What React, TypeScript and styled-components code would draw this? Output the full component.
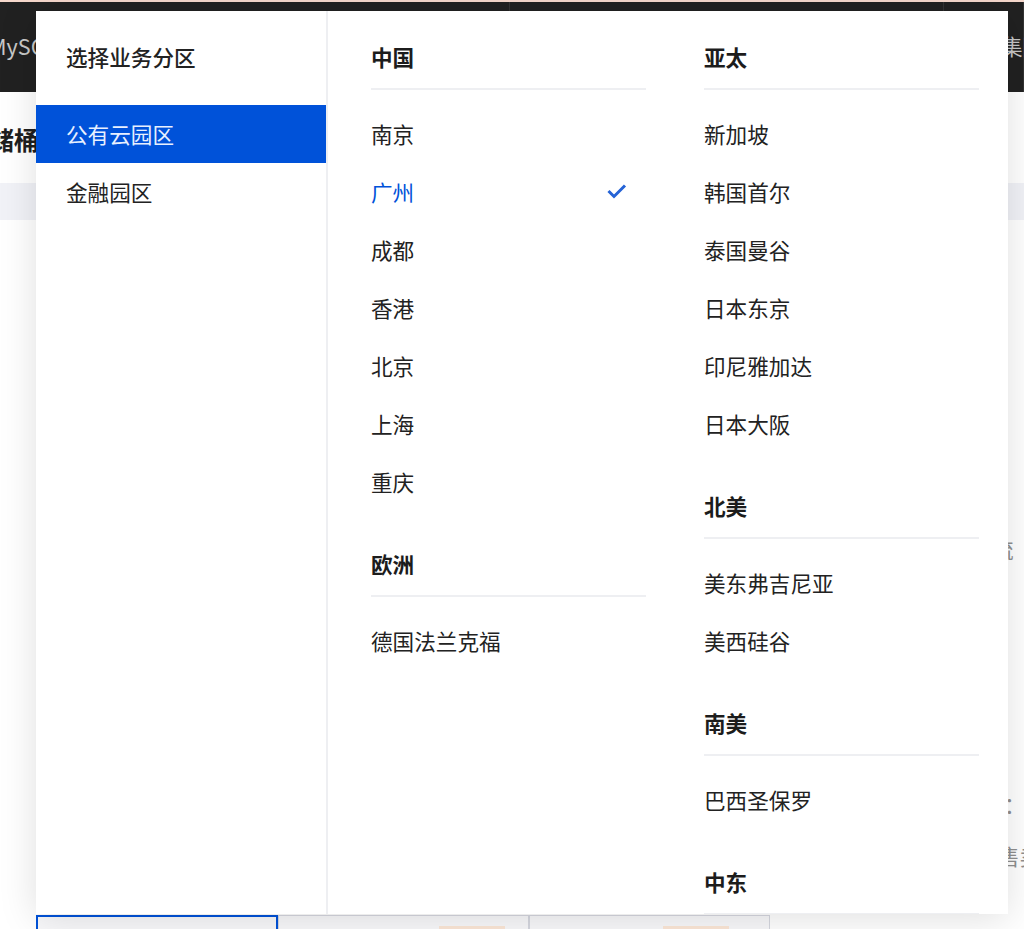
import { createGlobalStyle, styled } from 'styled-components';

const GlobalStyle = createGlobalStyle`
  html, body {
    margin: 0;
    padding: 0;
    background: #fff;
  }
  * {
    box-sizing: border-box;
  }
`;

const fontStack = `"Noto Sans CJK SC", "Liberation Sans", sans-serif`;

const Page = styled.div`
  position: relative;
  display: flex;
  flex-direction: column;
  width: 1024px;
  height: 929px;
  overflow: hidden;
  background: #fff;
  font-family: ${fontStack};
`;

const TopBar = styled.div`
  display: flex;
  flex: none;
  height: 92px;
  background: #212121;
  border-top: 2px solid #f6d8cc;
`;

const TopTab = styled.div<{ $width: number; $inset: number }>`
  flex: none;
  width: ${(p) => p.$width}px;
  padding-left: ${(p) => p.$inset}px;
  padding-top: 28px;
  border-right: 1px solid #333;
  color: #c8c8c8;
  font-size: 21.6px;
  line-height: 32px;
  white-space: nowrap;
`;

const TitleRow = styled.div`
  flex: none;
  height: 91px;
  padding-top: 29px;
  margin-left: -36px;
  color: #1f1f1f;
  font-size: 25px;
  font-weight: 700;
  line-height: 36px;
`;

const FilterStrip = styled.div`
  flex: none;
  height: 37px;
  background: #f1f2f7;
`;

const Body = styled.div`
  flex: none;
  height: 695px;
  padding-left: 992px;
  padding-top: 313px;
`;

const Note = styled.div<{ $gap: number; $indent?: number }>`
  margin-top: ${(p) => p.$gap}px;
  margin-left: ${(p) => p.$indent ?? 0}px;
  color: #8f8f8f;
  font-size: 21.6px;
  line-height: 32px;
  white-space: nowrap;
`;

const CardRow = styled.div`
  display: flex;
  flex: none;
  height: 60px;
  padding-left: 36px;
`;

const Card = styled.div<{ $width: number; $active?: boolean; $tagInset?: number }>`
  display: flex;
  justify-content: flex-end;
  flex: none;
  width: ${(p) => p.$width}px;
  padding-top: 10px;
  padding-right: ${(p) => p.$tagInset ?? 0}px;
  background: #f8f8fa;
  border: ${(p) => (p.$active ? '2px solid #0052d9' : '1px solid #d5d7df')};
`;

const CardTag = styled.span`
  width: 66px;
  height: 24px;
  background: #fbe6d6;
`;

const Panel = styled.div`
  position: absolute;
  top: 11px;
  left: 36px;
  display: flex;
  width: 972px;
  height: 903px;
  overflow: hidden;
  background: #fff;
  color: #222;
  box-shadow: 0 4px 36px rgba(0, 0, 0, 0.13);
`;

const Sidebar = styled.div`
  flex: none;
  width: 292px;
  border-right: 2px solid #eeeff2;
`;

const SidebarTitle = styled.div`
  height: 94px;
  padding: 30px 0 0 30px;
  font-size: 21.6px;
  font-weight: 500;
  line-height: 32px;
`;

const ZoneItem = styled.div<{ $active?: boolean }>`
  height: 58px;
  padding-left: 30px;
  background: ${(p) => (p.$active ? '#0052d9' : 'transparent')};
  color: ${(p) => (p.$active ? '#e8f0ff' : '#222')};
  font-size: 21.6px;
  line-height: 58px;
`;

const Regions = styled.div`
  display: grid;
  grid-template-columns: 275px 275px;
  column-gap: 58px;
  align-items: start;
  padding: 30px 0 0 43px;
`;

const RegionColumn = styled.div`
  display: flex;
  flex-direction: column;
  gap: 38px;
`;

const GroupTitle = styled.div`
  height: 49px;
  padding-bottom: 15px;
  border-bottom: 2px solid #eeeff2;
  color: #1c1c1c;
  font-size: 21.6px;
  font-weight: 700;
  line-height: 32px;
`;

const CityList = styled.div`
  display: flex;
  flex-direction: column;
  padding-top: 14px;
`;

const CityRow = styled.div<{ $selected?: boolean }>`
  display: flex;
  align-items: center;
  justify-content: space-between;
  height: 58px;
  padding-right: 19px;
  color: ${(p) => (p.$selected ? '#0052d9' : '#222')};
  font-size: 21.6px;
`;

const CheckMark = () => (
  <svg width="20" height="16" viewBox="0 0 20 16" fill="none">
    <path d="M1.5 8 L7 13.5 L18 2.5" stroke="#2563d6" strokeWidth="3" />
  </svg>
);

interface RegionGroup {
  name: string;
  cities: string[];
  selected?: string;
}

const leftGroups: RegionGroup[] = [
  { name: '中国', cities: ['南京', '广州', '成都', '香港', '北京', '上海', '重庆'], selected: '广州' },
  { name: '欧洲', cities: ['德国法兰克福'] },
];

const rightGroups: RegionGroup[] = [
  { name: '亚太', cities: ['新加坡', '韩国首尔', '泰国曼谷', '日本东京', '印尼雅加达', '日本大阪'] },
  { name: '北美', cities: ['美东弗吉尼亚', '美西硅谷'] },
  { name: '南美', cities: ['巴西圣保罗'] },
  { name: '中东', cities: ['沙特利雅得'] },
];

const renderGroups = (groups: RegionGroup[]) =>
  groups.map((group) => (
    <div key={group.name}>
      <GroupTitle>{group.name}</GroupTitle>
      <CityList>
        {group.cities.map((city) => (
          <CityRow key={city} $selected={city === group.selected}>
            {city}
            {city === group.selected && <CheckMark />}
          </CityRow>
        ))}
      </CityList>
    </div>
  ));

export default function App() {
  return (
    <Page>
      <GlobalStyle />
      <TopBar>
        <TopTab $width={510} $inset={0}>
          <span style={{ marginLeft: -11 }}>MySQL</span>
        </TopTab>
        <TopTab $width={434} $inset={0} />
        <TopTab $width={80} $inset={57}>
          集团
        </TopTab>
      </TopBar>
      <TitleRow>存储桶</TitleRow>
      <FilterStrip />
      <Body>
        <Note $gap={0}>流</Note>
        <Note $gap={223} $indent={12}>
          ：读写
        </Note>
        <Note $gap={20} $indent={6}>
          售卖产品
        </Note>
      </Body>
      <CardRow>
        <Card $width={242} $active />
        <Card $width={251} $tagInset={23} >
          <CardTag />
        </Card>
        <Card $width={241} $tagInset={40}>
          <CardTag />
        </Card>
      </CardRow>
      <Panel>
        <Sidebar>
          <SidebarTitle>选择业务分区</SidebarTitle>
          <ZoneItem $active>公有云园区</ZoneItem>
          <ZoneItem>金融园区</ZoneItem>
        </Sidebar>
        <Regions>
          <RegionColumn>{renderGroups(leftGroups)}</RegionColumn>
          <RegionColumn>{renderGroups(rightGroups)}</RegionColumn>
        </Regions>
      </Panel>
    </Page>
  );
}
